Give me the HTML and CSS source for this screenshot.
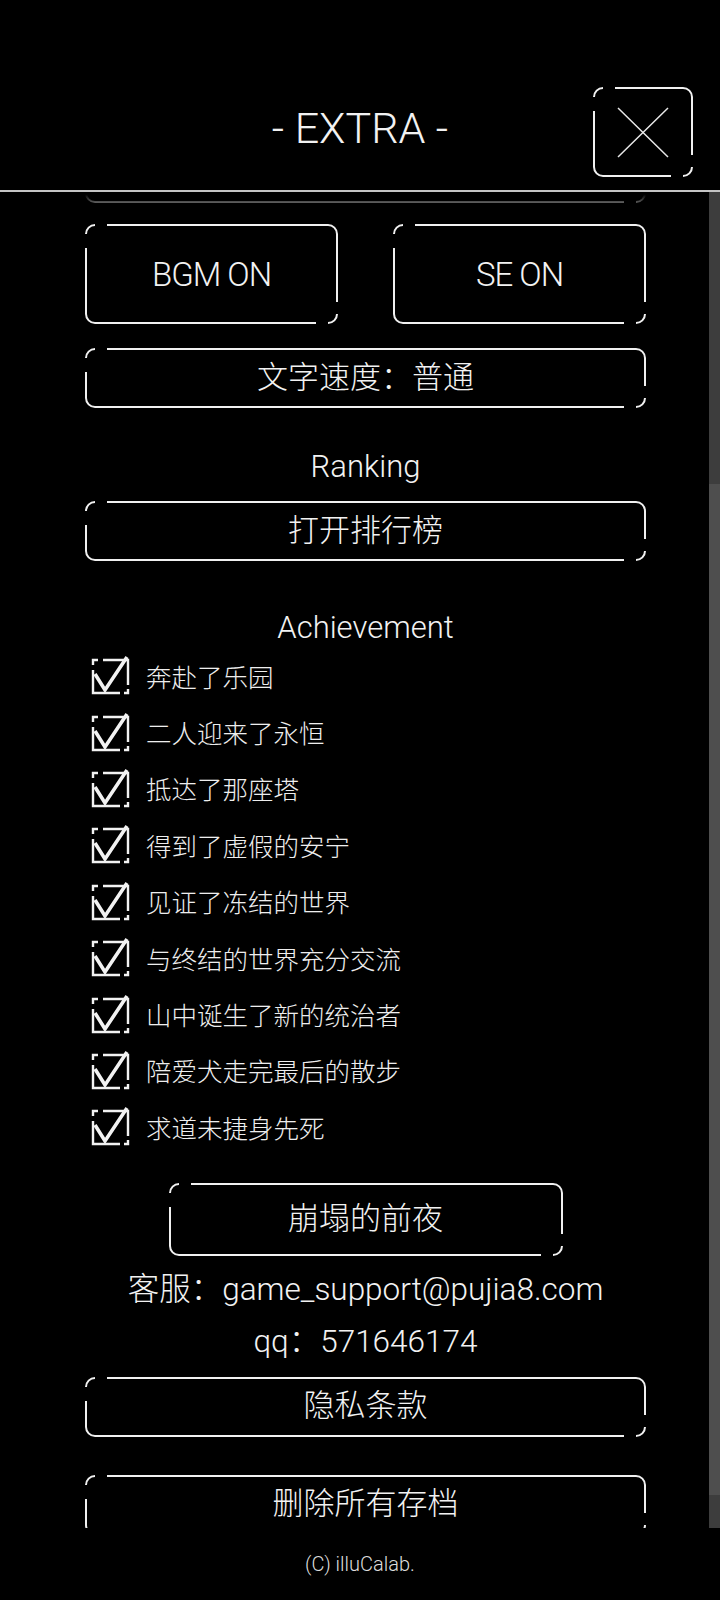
FILE: index.html
```html
<!DOCTYPE html>
<html lang="zh-CN">

<head>
    <meta charset="UTF-8">
    <meta name="viewport" content="width=device-width, initial-scale=1.0">
    <title>EXTRA</title>
    <link rel="stylesheet" href="styles.css">
</head>

<body>

    <svg class="defs" aria-hidden="true">
        <symbol id="checked" viewBox="0 0 40 40">
            <path d="M2 10 V5 H7 M12 5 H37 V30 M37 34 V38 H33 M29 38 H2 V15" stroke="#f2f2f2" stroke-width="2.4" fill="none" />
            <path d="M4 19 L14 35 L36 2" stroke="#f2f2f2" stroke-width="3.6" fill="none" stroke-linejoin="miter" />
        </symbol>
    </svg>

    <header class="top-bar">
        <div></div>
        <h1 class="title">- EXTRA -</h1>
        <button class="frame close-btn" aria-label="close">
            <svg width="52" height="51" viewBox="0 0 52 51">
                <path d="M1 1 L51 50 M51 1 L1 50" stroke="#e8e8e8" stroke-width="1.5" fill="none" />
            </svg>
        </button>
    </header>

    <div class="main">
        <div class="viewport" id="viewport">
            <div class="content">
                <button class="frame btn" id="soundBtn" aria-label="sound"></button>

                <div class="toggle-row gap-t">
                    <button class="frame toggle">BGM ON</button>
                    <button class="frame toggle">SE ON</button>
                </div>
                <button class="frame btn gap-r">文字速度：普通</button>

                <div class="section-label gap-l">Ranking</div>
                <button class="frame btn gap-s">打开排行榜</button>

                <div class="section-label gap-xl">Achievement</div>
                <ul class="ach-list">
                    <li class="ach-item"><svg class="check"><use href="#checked" /></svg>奔赴了乐园</li>
                    <li class="ach-item"><svg class="check"><use href="#checked" /></svg>二人迎来了永恒</li>
                    <li class="ach-item"><svg class="check"><use href="#checked" /></svg>抵达了那座塔</li>
                    <li class="ach-item"><svg class="check"><use href="#checked" /></svg>得到了虚假的安宁</li>
                    <li class="ach-item"><svg class="check"><use href="#checked" /></svg>见证了冻结的世界</li>
                    <li class="ach-item"><svg class="check"><use href="#checked" /></svg>与终结的世界充分交流</li>
                    <li class="ach-item"><svg class="check"><use href="#checked" /></svg>山中诞生了新的统治者</li>
                    <li class="ach-item"><svg class="check"><use href="#checked" /></svg>陪爱犬走完最后的散步</li>
                    <li class="ach-item"><svg class="check"><use href="#checked" /></svg>求道未捷身先死</li>
                </ul>

                <button class="frame btn story-btn">崩塌的前夜</button>

                <div class="contact">
                    <div class="contact-line">客服：game_support@pujia8.com</div>
                    <div class="contact-line">qq：571646174</div>
                </div>

                <button class="frame btn privacy-btn">隐私条款</button>
                <button class="frame btn delete-btn">删除所有存档</button>
            </div>
        </div>
        <div class="scroll-track" id="track">
            <div class="scroll-thumb" id="thumb"></div>
        </div>
    </div>

    <footer class="footer">(C) illuCalab.</footer>

    <script>
        const viewport = document.getElementById('viewport');
        const anchor = document.getElementById('soundBtn');
        viewport.scrollTop = anchor.offsetTop + anchor.offsetHeight - 11;

        const track = document.getElementById('track');
        const thumb = document.getElementById('thumb');
        const ratio = viewport.clientHeight / viewport.scrollHeight;
        thumb.style.height = (track.clientHeight * ratio) + 'px';
        thumb.style.marginTop = (viewport.scrollTop / viewport.scrollHeight * track.clientHeight) + 'px';
    </script>

</body>

</html>
```

FILE: styles.css
```css
html,
body {
    height: 100%;
    margin: 0;
    background-color: #000;
}

body {
    display: flex;
    flex-direction: column;
    color: #f2f2f2;
    font-family: "Roboto", "Noto Sans CJK SC", sans-serif;
    font-weight: 300;
}

.defs {
    position: absolute;
    width: 0;
    height: 0;
}

/* header */

.top-bar {
    height: 192px;
    box-sizing: border-box;
    flex-shrink: 0;
    border-bottom: 2px solid #c4c4c4;
    display: grid;
    grid-template-columns: 1fr auto 1fr;
    padding: 87px 27px 13px;
}

.title {
    margin: 0 0 8px;
    align-self: center;
    font-size: 43px;
    font-weight: 300;
    white-space: pre;
}

.close-btn {
    justify-self: end;
    width: 100px;
    height: 90px;
}

/* broken corner frame */

.frame {
    position: relative;
    box-sizing: border-box;
    border: 2px solid #f0f0f0;
    border-radius: 10px;
    background: none;
    color: inherit;
    font: inherit;
    padding: 0;
    margin: 0;
    display: flex;
    align-items: center;
    justify-content: center;
    cursor: pointer;
}

.frame::before {
    content: "";
    position: absolute;
    top: -2px;
    left: -2px;
    width: 24px;
    height: 26px;
    background:
        linear-gradient(#000, #000) 10px 0 / 12px 2px no-repeat,
        linear-gradient(#000, #000) 0 10px / 2px 14px no-repeat;
}

.frame::after {
    content: "";
    position: absolute;
    right: -2px;
    bottom: -2px;
    width: 22px;
    height: 22px;
    background:
        linear-gradient(#000, #000) right 0 top 0 / 2px 12px no-repeat,
        linear-gradient(#000, #000) left 0 bottom 0 / 12px 2px no-repeat;
}

/* scroll area */

.main {
    flex: 1;
    min-height: 0;
    display: flex;
    position: relative;
}

.main::before {
    content: "";
    position: absolute;
    top: 0;
    left: 0;
    right: 11px;
    height: 24px;
    background: linear-gradient(#000 10%, rgba(0, 0, 0, 0));
    z-index: 1;
    pointer-events: none;
}

.viewport {
    flex: 1;
    overflow: hidden;
    position: relative;
}

/* top padding stands in for the settings scrolled out of view */
.content {
    display: flex;
    flex-direction: column;
    padding: 337px 63px 37px 85px;
}

.scroll-track {
    width: 11px;
    background-color: #3d3d3d;
}

.scroll-thumb {
    background-color: #4e4e4e;
}

.section-label {
    height: 40px;
    line-height: 40px;
    text-align: center;
    font-size: 31px;
}

.gap-s {
    margin-top: 14px;
}

.gap-t {
    margin-top: 21px;
}

.gap-r {
    margin-top: 24px;
}

.gap-l {
    margin-top: 39px;
}

.gap-xl {
    margin-top: 47px;
}

.toggle-row {
    display: grid;
    grid-template-columns: 1fr 1fr;
    gap: 55px;
}

.toggle {
    height: 100px;
    font-size: 33px;
    letter-spacing: -1px;
}

.btn {
    height: 60px;
    padding-bottom: 8px;
    font-family: "Noto Sans CJK SC", sans-serif;
    font-size: 31px;
}

.ach-list {
    list-style: none;
    margin: 0;
    padding: 0;
}

.ach-item {
    height: 56.4px;
    display: flex;
    align-items: center;
    gap: 15px;
    padding-left: 6px;
    padding-bottom: 2px;
    box-sizing: border-box;
    font-family: "Noto Sans CJK SC", sans-serif;
    font-size: 25.5px;
    color: #eee;
}

.check {
    width: 40px;
    height: 40px;
    overflow: visible;
}

.story-btn {
    align-self: center;
    width: 394px;
    height: 73px;
    margin-top: 27px;
}

.contact {
    margin-top: 8px;
    text-align: center;
    font-size: 31.5px;
}

.contact-line {
    height: 52px;
    line-height: 52px;
}

.privacy-btn {
    margin-top: 9px;
}

.delete-btn {
    margin-top: 38px;
}

/* footer */

.footer {
    height: 72px;
    flex-shrink: 0;
    display: flex;
    align-items: center;
    justify-content: center;
    font-size: 20px;
    color: #ddd;
}
```
